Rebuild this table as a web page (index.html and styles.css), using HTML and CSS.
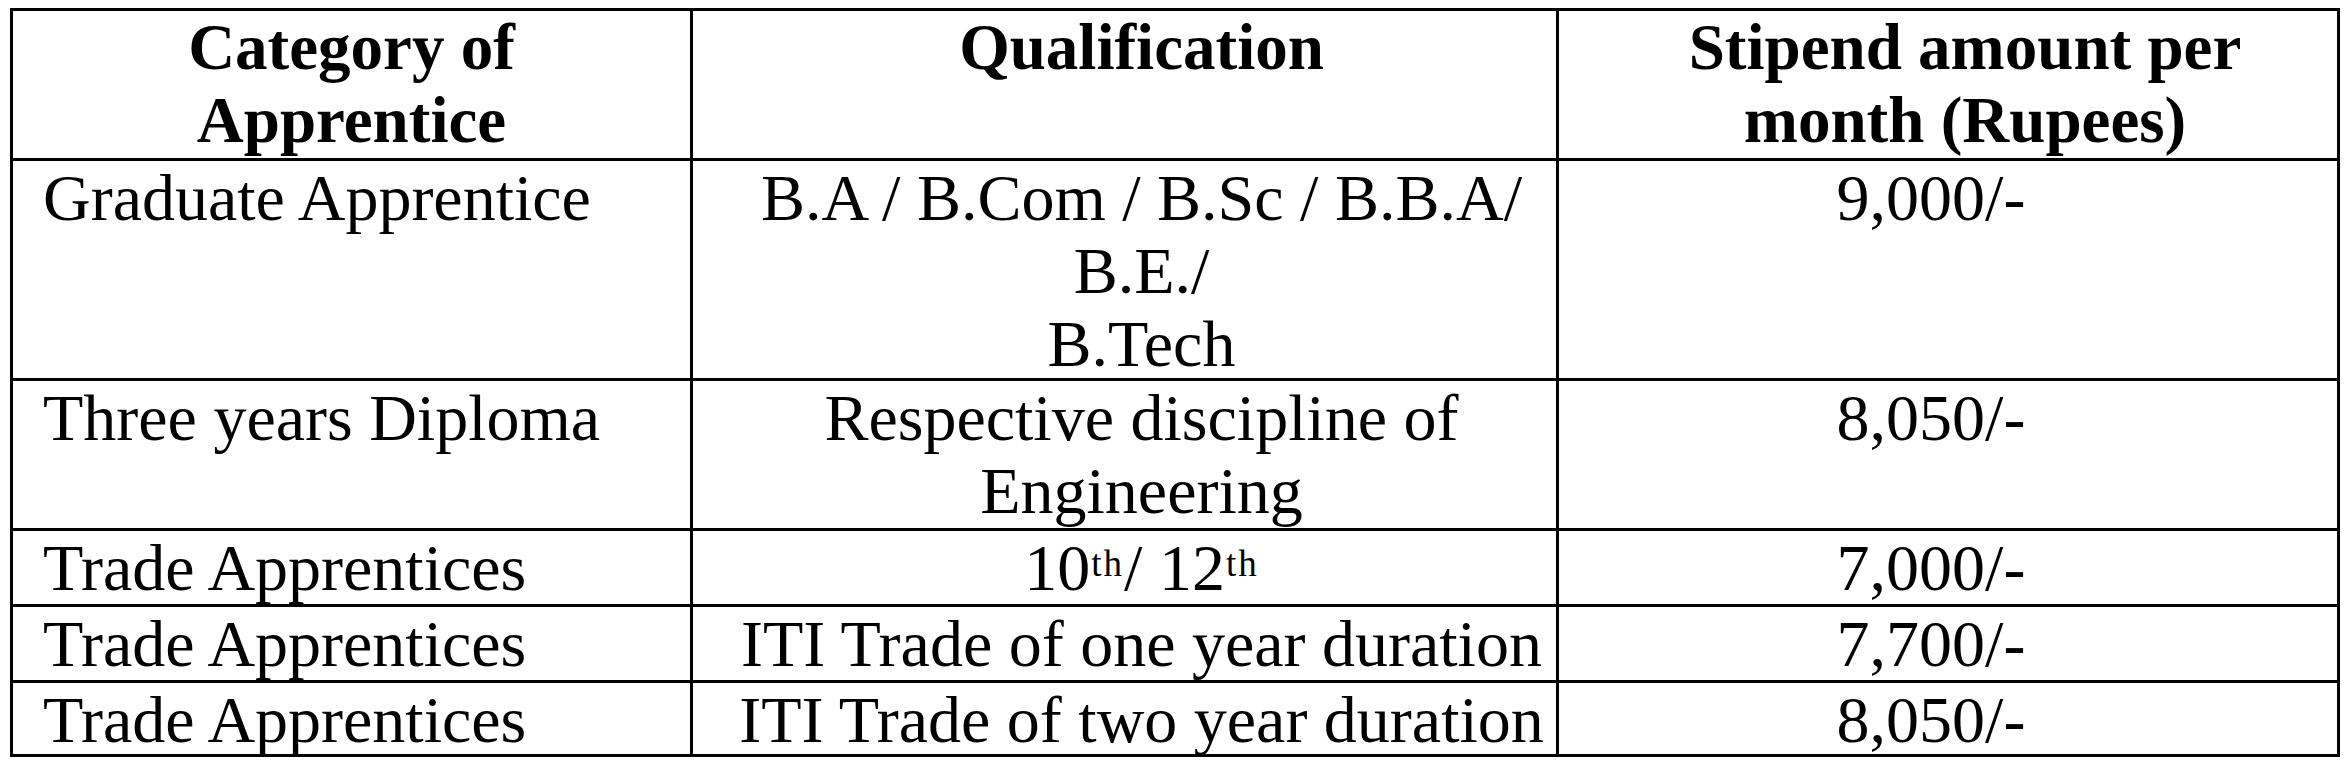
FILE: index.html
```html
<!DOCTYPE html>
<html lang="en">
<head>
<meta charset="utf-8">
<title>Stipend for Apprentices</title>
<link rel="stylesheet" href="styles.css">
</head>
<body>
<div class="sheet">
  <div class="grid">
    <div class="cell head c1">Category of<br>Apprentice</div>
    <div class="cell head c2">Qualification</div>
    <div class="cell head c3">Stipend amount per<br>month (Rupees)</div>

    <div class="cell c1">Graduate Apprentice</div>
    <div class="cell c2">B.A / B.Com / B.Sc / B.B.A/<br>B.E./<br>B.Tech</div>
    <div class="cell c3 val">9,000/-</div>

    <div class="cell c1">Three years Diploma</div>
    <div class="cell c2">Respective discipline of<br>Engineering</div>
    <div class="cell c3 val">8,050/-</div>

    <div class="cell c1">Trade Apprentices</div>
    <div class="cell c2">10<sup class="ord">th</sup>/ 12<sup class="ord">th</sup></div>
    <div class="cell c3 val">7,000/-</div>

    <div class="cell c1">Trade Apprentices</div>
    <div class="cell c2">ITI Trade of one year duration</div>
    <div class="cell c3 val">7,700/-</div>

    <div class="cell c1">Trade Apprentices</div>
    <div class="cell c2">ITI Trade of two year duration</div>
    <div class="cell c3 val">8,050/-</div>
  </div>
</div>
</body>
</html>
```

FILE: styles.css
```css
html, body {
  margin: 0;
  padding: 0;
  background: #ffffff;
}

.sheet {
  padding: 8px 0 0 10px;
}

.grid {
  display: grid;
  grid-template-columns: 680px 866px 781px;
  grid-template-rows: 150px 220px 150px 76px 76px 74px;
  width: max-content;
  border-left: 3px solid #000;
  border-top: 3px solid #000;
  font-family: "Liberation Serif", "Times New Roman", serif;
  font-size: 66px;
  line-height: 73px;
  color: #000;
}

.cell {
  border-right: 3px solid #000;
  border-bottom: 3px solid #000;
  padding: 0;
  overflow: hidden;
  white-space: nowrap;
}

.head {
  font-weight: bold;
  font-size: 65px;
  text-align: center;
}

.c1 {
  padding-left: 30px;
}

.head.c1 {
  padding-left: 0;
}

.c2 {
  text-align: center;
  padding-left: 34px;
}

.c3 {
  text-align: center;
}

.head.c3 {
  padding-left: 34px;
}

.val {
  padding-right: 34px;
}

.ord {
  font-size: 37px;
  letter-spacing: 2px;
  line-height: 0;
  vertical-align: 14px;
  margin-left: 1px;
}
```
